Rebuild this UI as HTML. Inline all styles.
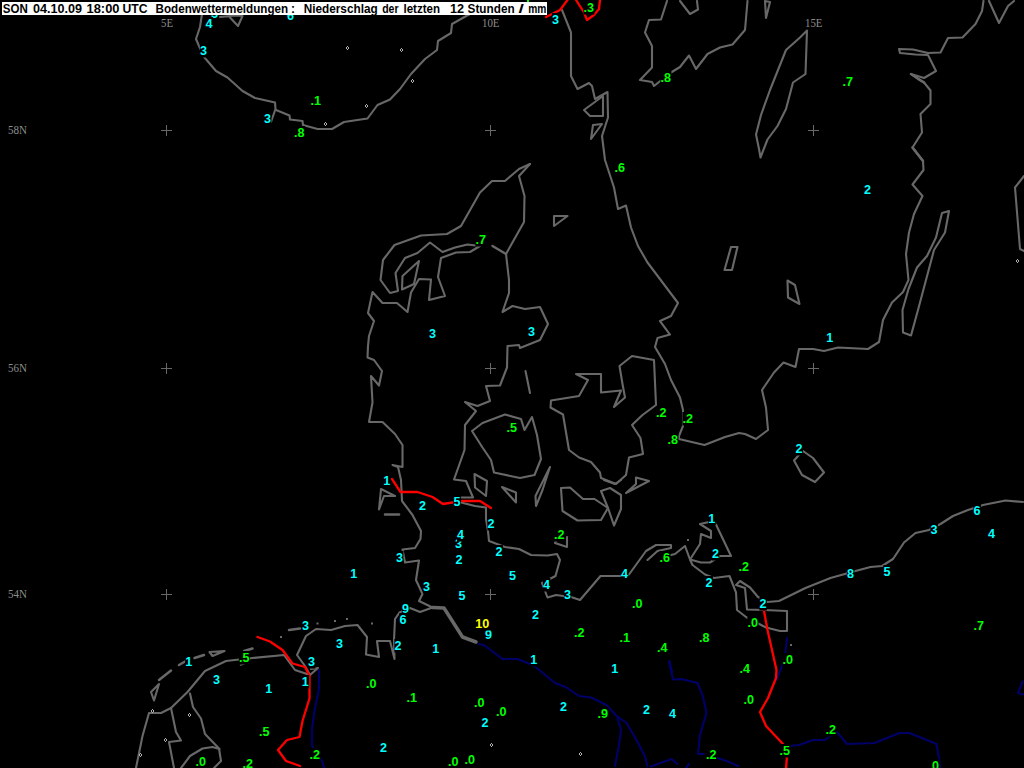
<!DOCTYPE html>
<html lang="de"><head><meta charset="utf-8"><title>Bodenwettermeldungen - Niederschlag</title>
<style>html,body{margin:0;padding:0;background:#000;overflow:hidden}svg{display:block}.lb text{font-family:"Liberation Sans",Arial,sans-serif;font-weight:bold;font-size:13px}.gl text{font-family:"Liberation Serif","Times New Roman",serif;font-size:12px;fill:#8c8c8c}.tt text{font-family:"Liberation Sans",Arial,sans-serif;font-weight:bold;font-size:12.5px;fill:#000}</style></head><body>
<svg width="1024" height="768" viewBox="0 0 1024 768">
<rect width="1024" height="768" fill="#000"/>
<g stroke="#686868" stroke-width="1" shape-rendering="crispEdges">
<path d="M161,130.5h11M166.5,125v11"/>
<path d="M161,368.5h11M166.5,363v11"/>
<path d="M161,594.5h11M166.5,589v11"/>
<path d="M485,130.5h11M490.5,125v11"/>
<path d="M485,368.5h11M490.5,363v11"/>
<path d="M485,594.5h11M490.5,589v11"/>
<path d="M808,130.5h11M813.5,125v11"/>
<path d="M808,368.5h11M813.5,363v11"/>
<path d="M808,594.5h11M813.5,589v11"/>
</g>
<g class="gl">
<text x="161" y="27" textLength="12" lengthAdjust="spacingAndGlyphs">5E</text>
<text x="482" y="27" textLength="17.5" lengthAdjust="spacingAndGlyphs">10E</text>
<text x="805" y="27" textLength="17.5" lengthAdjust="spacingAndGlyphs">15E</text>
<text x="8" y="134" textLength="19" lengthAdjust="spacingAndGlyphs">58N</text>
<text x="8" y="372" textLength="19" lengthAdjust="spacingAndGlyphs">56N</text>
<text x="8" y="598" textLength="19" lengthAdjust="spacingAndGlyphs">54N</text>
</g>
<g fill="none" stroke-linejoin="round" stroke-linecap="round">
<polyline points="202,14 200,27 196,39 199,46 204.5,57.5 216,71 227.5,77.5 242.5,91 255,98 275,102.5 275.5,109 271,122" stroke="#686868" stroke-width="2.1" />
<polyline points="276,110 289.5,115.5 290,119.5 302.5,121 303,125 317.5,129 332,129 344,122 367.5,118.5 377.5,105 390,99.5 400,89 411,74 425,59 437,50 438,41 451,33 452,24 464.5,17 470,14" stroke="#686868" stroke-width="2.1" />
<polyline points="220,17 235,15.5 242.5,16 238,26 230,17.5" stroke="#686868" stroke-width="2.1" />
<polyline points="562,10 571,32.5 571,76 577.5,89 589,83 592,86 595,99 607.5,92 608,117.5 602,136 605,160 614,187.5 618,209 626,205.5 631,227.5 638,246 647.5,262.5 678,303 671,316 660,321 670,334.5 657.5,338 655,347 665,364 671,380 680,397.5 683,410 683,426 679,436 679,439 704.5,445 725,437 739,433 745,434 756,439 768,430 766,407.5 762,390 774,372.5 783.5,362.5 795.5,367 799,349 813,349 824,351 838,347.5 868,349 879,342 883,320 892,302.5 903,292 908.5,280 906,254 909,232.5 914,214 922.5,196 912.5,184.5 923.5,170 923,161 912.5,147.5 922,132.5 920.5,114 930.5,104 930.5,90.5 924,82.5 918,79 911,74 924,78 936,71 928,55 915.5,54.5 900,53 899,49 913,49.5 928,53 940.5,52.5 948,38 962.5,37.5 975.5,24 982,11 983.5,1" stroke="#686868" stroke-width="2.1" />
<polyline points="603,96 584,110 590,116 603,116 603,96" stroke="#686868" stroke-width="2.1" />
<polyline points="593,125 602,124 591,139 593,125" stroke="#686868" stroke-width="2.1" />
<polyline points="667,1 661,19.5 649,20 645,32.5 652,46 652,67.5 640,80 652,82 654,86 659,82 671,72.5 680,67 689,55.5 696,69 707.5,54 720,47.5 732.5,44.5 745,30 747.5,1" stroke="#686868" stroke-width="2.1" />
<polyline points="680,1 690,14 698,9.5 697,1" stroke="#686868" stroke-width="2.1" />
<polyline points="765,1 766,18 770,2 765,1" stroke="#686868" stroke-width="2.1" />
<polyline points="807,30.5 800,37.5 786,50 770,90 761,115 756,134.5 759,149 760.5,157.5 767.5,139.5 777.5,126 786,109 793,82.5 805.5,74 807,30.5" stroke="#686868" stroke-width="2.1" />
<polyline points="989,1 999,23 1008,6 1014,1" stroke="#686868" stroke-width="2.1" />
<polyline points="1024,176 1015,187.5 1020,249 1024,251" stroke="#686868" stroke-width="2.1" />
<polyline points="731,247 737.5,247 732,270 724.5,270 731,247" stroke="#686868" stroke-width="2.1" />
<polyline points="787.5,280.5 795,285 799.5,304 788,297.5 787.5,280.5" stroke="#686868" stroke-width="2.1" />
<polyline points="949,211 942,213 936,237.5 927,256 917,267.5 908.5,289 902.5,310 903,332.5 911,335.5 918,310 934,250 945,232.5 949,211" stroke="#686868" stroke-width="2.1" />
<polyline points="803,451 813,458 824,472.5 815,482 802,475 794,460.5 798,456 803,451" stroke="#686868" stroke-width="2.1" />
<polyline points="530,164 519,169 505,181 492,181 480,192.5 461,226 447,234 421,235.5 394.5,245 383,260 380.5,280 390,293 398,291 395.5,273 405,258 417.5,253 430,242.5 442.5,252 455,247.5 467.5,244.5 480,246 470,252 456,252.5 441,258 438,277 445,296 429,300 431,279.5 419,279 411,292.5 407.5,312 397,303 382.5,303 372.5,292 368,313 374,321 369,336 368,346 367.5,357.5 374,360 382,371 379,385.5 371,376 372.5,402.5 369,422 382.5,422 395,434 402.5,445 402.5,467 392.5,465 398,467 401,480 402,501 412.5,515 421,531 420.5,539 415,548 402.5,549.5 405,562.5 419,560.5 416,580 422.5,594 419,601 432.5,607.5 420,612 410,608 399.5,612.5 395,619 394,640 394.5,659 390,641 377,641 379,657 366,654.5 367,637 357.5,625 345,626 331,630 316,629 306,636 297,655 305,666 310,675 295,670 284,655 252.5,658 226,661 205,671 187.5,692 171,708 161,713 149,713 142.5,736 136,768" stroke="#686868" stroke-width="2.1" />
<polyline points="310,675 318,668 311,669" stroke="#686868" stroke-width="2.1" />
<polyline points="530,164 519,176 524.5,196 524,222 506,254 509,280 509,293 502.5,312 512.5,306 525,309 540,307 548,324 540,340 520,348 519,345 507.5,346 507,367.5 500,385.5 486,386 490,401 477.5,406 465,402 476,411 465,425 464.5,450 454,479.5 466,481 473,497.5 461,497.5" stroke="#686868" stroke-width="2.1" />
<polyline points="461,502.5 475,506 486,507.5 486,519 488,531 489,541 505,547 519,549 531,555 547.5,555.5 557,554 560,560 555.5,576 542,583 547.5,597.5 556,595 571,597 580,600 600.5,576 620,576 629,574.5 646,551 656,545 671,545 671,548 657.5,551 647.5,560" stroke="#686868" stroke-width="2.1" />
<polyline points="671,555 675,554 685,546 690,559.5 701,562.5 710,562.5 720,556 731,556 716,524.5" stroke="#686868" stroke-width="2.1" />
<polyline points="709,522 700,524 711,531 711,538 701,534 700,544 690,559.5 692.5,565 705,574.5 714,578 729.5,576 736,592.5 737,610 746,617 766,627.5 780,631 787,631 787,611 764,610 747,609.5 745,588 736,585 740,581 750,587.5 758,597 767.5,602 779,601 805.5,588 830.5,578 855.5,571 870.5,567 882,566 893,559 904,542.5 915.5,533 929,530 940.5,524 953,516 968,510 983,505 1005.5,500.5 1023,502" stroke="#686868" stroke-width="2.1" />
<polyline points="554,216 567.5,216 554,226 554,216" stroke="#686868" stroke-width="2.1" />
<polyline points="419,261 402.5,276 402,289.5 414,284 419,261" stroke="#686868" stroke-width="2.1" />
<polyline points="505,414.5 482.5,423 472,431 482.5,447.5 491,460 494,472.5 520,478 534.5,475 541,459 537,435 532,417 524.5,430 521,419 505,414.5" stroke="#686868" stroke-width="2.1" />
<polyline points="525.5,371 530,393" stroke="#686868" stroke-width="2.1" />
<polyline points="474.5,474 487,481 486,496 475,487.5 474.5,474" stroke="#686868" stroke-width="2.1" />
<polyline points="502,487 516,492.5 516,502.5 502,487" stroke="#686868" stroke-width="2.1" />
<polyline points="550,467 535.5,496 536,506 542.5,490 550,467" stroke="#686868" stroke-width="2.1" />
<polyline points="632,356 619.5,366 622.5,384 625,397.5 614,407 621,390.5 601,392.5 601,374 576,374 588,380 579,396 551,400.5 550.5,407.5 563,414.5 569,450 579,457.5 591,462 600,472.5 601,478 616,484 626,475 629,457.5 643,454 640.5,438 632,425 642.5,415 656,405 654,360 632,356" stroke="#686868" stroke-width="2.1" />
<polyline points="636,477.5 649,481 626,493 636,484 636,477.5" stroke="#686868" stroke-width="2.1" />
<polyline points="561,488 570,487.5 583,499 594.5,499 608,508 601,520 577.5,520.5 562.5,511 561,488" stroke="#686868" stroke-width="2.1" />
<polyline points="601,491 610,488 621,495 621,509 614,525.5 608,508 601,491" stroke="#686868" stroke-width="2.1" />
<polyline points="604,480 615,484 621,480" stroke="#686868" stroke-width="2.1" />
<polyline points="557,538 555,543 567,547 567,537" stroke="#686868" stroke-width="2.1" />
<polyline points="381,489 395,496 384,496 379,509.5 381,489" stroke="#686868" stroke-width="2.1" />
<polyline points="171,708 176,732 181,740.5 169,742 174,768" stroke="#686868" stroke-width="2.1" />
<polyline points="190,693.5 193,707 201,718.5 205,734 219,748.5 221,761 214,768" stroke="#686868" stroke-width="2.1" />
<polyline points="181,768 190,756 202.5,748.5 212.5,747 219.5,749" stroke="#686868" stroke-width="2.1" />
<polyline points="209.5,652 224.5,651 212.5,656 209.5,652" stroke="#686868" stroke-width="2.1" />
<polyline points="159,684 151,692 154,700.5 159,684" stroke="#686868" stroke-width="2.1" />
<polyline points="432.5,607.5 444,608 462.5,637 476,642" stroke="#686868" stroke-width="3.5" />
<polyline points="492.5,246 506,254" stroke="#686868" stroke-width="2.5" />
<polyline points="912.5,147.5 923,161" stroke="#686868" stroke-width="2.5" />
<polyline points="385,514.5 399,514.5" stroke="#686868" stroke-width="2.5" />
<polyline points="289,630 300,628.5" stroke="#686868" stroke-width="2.5" />
<polyline points="244,651 252.5,648.5" stroke="#686868" stroke-width="2.5" />
<polyline points="240.5,665 244,664" stroke="#686868" stroke-width="1.5" />
<polyline points="194.5,658 204,655" stroke="#686868" stroke-width="2.5" />
<polyline points="179,665 185,661.5" stroke="#686868" stroke-width="2.5" />
<polyline points="159,680 171,670.5" stroke="#686868" stroke-width="2.5" />
<polyline points="911,74 924,82.5" stroke="#686868" stroke-width="2.5" />
<polyline points="319,670 319,688.5 314.5,711 312,728.5 312,746 322.5,762 324,768" stroke="#000068" stroke-width="2.1" />
<polyline points="479,644 484,645 502.5,659 517.5,659 527.5,663 535,666.5 555,683 566.5,687.5 579,696 591,697.5 606.5,705 616.5,716 626.5,723 636.5,740 645,756.5 647.5,766.5" stroke="#000068" stroke-width="2.1" />
<polyline points="617.5,718 621,730 619,745 615,766" stroke="#000068" stroke-width="2.1" />
<polyline points="651,766.5 671.5,759 677.5,764" stroke="#000068" stroke-width="2.1" />
<polyline points="669,661.5 673,679.5 681.5,679 697.5,683 703,696.5 706.5,713 700,735 698,754 704,754" stroke="#000068" stroke-width="2.1" />
<polyline points="689,764 686,768" stroke="#000068" stroke-width="2.1" />
<polyline points="717.5,758 728,761.5 738,766" stroke="#000068" stroke-width="2.1" />
<polyline points="787,638 785.5,652.5" stroke="#000068" stroke-width="2.1" />
<polyline points="783,663 776.5,680" stroke="#000068" stroke-width="2.1" />
<polyline points="791,746 799,745 813,740 825,740 830.5,736 837,732 847,744 874.5,743 899.5,733 909.5,733 936.5,744 939,758 940,768" stroke="#000068" stroke-width="2.1" />
<polyline points="1022.5,681.5 1018,693 1023,694.5" stroke="#000068" stroke-width="2.1" />
<polyline points="669.5,661 672,672" stroke="#000068" stroke-width="2.1" />
<polyline points="546,17 560,10 567.5,0" stroke="#ff0000" stroke-width="2.3" />
<polyline points="576,0 584,12.5 587,20 594,15 599,9 600,0" stroke="#ff0000" stroke-width="2.3" />
<polyline points="392,479 400.5,492 417.5,492 432.5,497 443,504 452.5,502.5" stroke="#ff0000" stroke-width="2.3" />
<polyline points="462,501 480,501 491,508" stroke="#ff0000" stroke-width="2.3" />
<polyline points="257.5,637 270,641.5 282.5,650 292.5,663.5 305,667 309.5,676 309.5,698.5 302.5,721 299.5,737 287,740 278,750 286,761 300,766" stroke="#ff0000" stroke-width="2.3" />
<polyline points="764,611 767.5,630 776.5,670 776,678 768,698 760,712 766,726 783,744 787,756.5 786,768" stroke="#ff0000" stroke-width="2.3" />
</g>
<rect x="280" y="636" width="2" height="2" fill="#686868"/>
<rect x="316.5" y="622.5" width="2" height="2" fill="#686868"/>
<rect x="334" y="620" width="2" height="2" fill="#686868"/>
<rect x="346" y="618" width="2" height="2" fill="#686868"/>
<rect x="371" y="622.5" width="2" height="2" fill="#686868"/>
<rect x="687" y="539" width="2" height="2" fill="#686868"/>
<rect x="790" y="644" width="2" height="2" fill="#686868"/>
<g fill="#b0b0b0" shape-rendering="crispEdges">
<path d="M347,46h1v1h-1zM346,47h1v2h-1zM348,47h1v2h-1zM347,49h1v1h-1z"/>
<path d="M401,48h1v1h-1zM400,49h1v2h-1zM402,49h1v2h-1zM401,51h1v1h-1z"/>
<path d="M412,79h1v1h-1zM411,80h1v2h-1zM413,80h1v2h-1zM412,82h1v1h-1z"/>
<path d="M366,104h1v1h-1zM365,105h1v2h-1zM367,105h1v2h-1zM366,107h1v1h-1z"/>
<path d="M325,122h1v1h-1zM324,123h1v2h-1zM326,123h1v2h-1zM325,125h1v1h-1z"/>
<path d="M1017,259h1v1h-1zM1016,260h1v2h-1zM1018,260h1v2h-1zM1017,262h1v1h-1z"/>
<path d="M152,709h1v1h-1zM151,710h1v2h-1zM153,710h1v2h-1zM152,712h1v1h-1z"/>
<path d="M189,713h1v1h-1zM188,714h1v2h-1zM190,714h1v2h-1zM189,716h1v1h-1z"/>
<path d="M165,738h1v1h-1zM164,739h1v2h-1zM166,739h1v2h-1zM165,741h1v1h-1z"/>
<path d="M140,753h1v1h-1zM139,754h1v2h-1zM141,754h1v2h-1zM140,756h1v1h-1z"/>
<path d="M491,743h1v1h-1zM490,744h1v2h-1zM492,744h1v2h-1zM491,746h1v1h-1z"/>
<path d="M580,752h1v1h-1zM579,753h1v2h-1zM581,753h1v2h-1zM580,755h1v1h-1z"/>
</g>
<g class="lb">
<rect x="286.9" y="9.0" width="7.5" height="13.5" fill="#000"/><text x="286.9" y="20.0" fill="#00ffff" textLength="7.0" lengthAdjust="spacingAndGlyphs">6</text>
<rect x="210.9" y="7.0" width="7.5" height="13.5" fill="#000"/><text x="210.9" y="18.0" fill="#00ffff" textLength="7.0" lengthAdjust="spacingAndGlyphs">3</text>
<rect x="205.6" y="17.0" width="7.5" height="13.5" fill="#000"/><text x="205.6" y="28.0" fill="#00ffff" textLength="7.0" lengthAdjust="spacingAndGlyphs">4</text>
<rect x="199.9" y="44.0" width="7.5" height="13.5" fill="#000"/><text x="199.9" y="55.0" fill="#00ffff" textLength="7.0" lengthAdjust="spacingAndGlyphs">3</text>
<rect x="263.9" y="112.0" width="7.5" height="13.5" fill="#000"/><text x="263.9" y="123.0" fill="#00ffff" textLength="7.0" lengthAdjust="spacingAndGlyphs">3</text>
<rect x="551.9" y="13.0" width="7.5" height="13.5" fill="#000"/><text x="551.9" y="24.0" fill="#00ffff" textLength="7.0" lengthAdjust="spacingAndGlyphs">3</text>
<rect x="863.9" y="183.0" width="7.5" height="13.5" fill="#000"/><text x="863.9" y="194.0" fill="#00ffff" textLength="7.0" lengthAdjust="spacingAndGlyphs">2</text>
<rect x="428.9" y="327.0" width="7.5" height="13.5" fill="#000"/><text x="428.9" y="338.0" fill="#00ffff" textLength="7.0" lengthAdjust="spacingAndGlyphs">3</text>
<rect x="527.9" y="325.0" width="7.5" height="13.5" fill="#000"/><text x="527.9" y="336.0" fill="#00ffff" textLength="7.0" lengthAdjust="spacingAndGlyphs">3</text>
<rect x="826.2" y="331.0" width="7.5" height="13.5" fill="#000"/><text x="826.2" y="342.0" fill="#00ffff" textLength="7.0" lengthAdjust="spacingAndGlyphs">1</text>
<rect x="795.4" y="442.0" width="7.5" height="13.5" fill="#000"/><text x="795.4" y="453.0" fill="#00ffff" textLength="7.0" lengthAdjust="spacingAndGlyphs">2</text>
<rect x="383.2" y="474.0" width="7.5" height="13.5" fill="#000"/><text x="383.2" y="485.0" fill="#00ffff" textLength="7.0" lengthAdjust="spacingAndGlyphs">1</text>
<rect x="418.9" y="499.0" width="7.5" height="13.5" fill="#000"/><text x="418.9" y="510.0" fill="#00ffff" textLength="7.0" lengthAdjust="spacingAndGlyphs">2</text>
<rect x="453.4" y="495.0" width="7.5" height="13.5" fill="#000"/><text x="453.4" y="506.0" fill="#00ffff" textLength="7.0" lengthAdjust="spacingAndGlyphs">5</text>
<rect x="487.4" y="517.0" width="7.5" height="13.5" fill="#000"/><text x="487.4" y="528.0" fill="#00ffff" textLength="7.0" lengthAdjust="spacingAndGlyphs">2</text>
<rect x="454.9" y="536.5" width="7.5" height="13.5" fill="#000"/><text x="454.9" y="547.5" fill="#00ffff" textLength="7.0" lengthAdjust="spacingAndGlyphs">3</text>
<rect x="456.9" y="528.0" width="7.5" height="13.5" fill="#000"/><text x="456.9" y="539.0" fill="#00ffff" textLength="7.0" lengthAdjust="spacingAndGlyphs">4</text>
<rect x="455.4" y="553.0" width="7.5" height="13.5" fill="#000"/><text x="455.4" y="564.0" fill="#00ffff" textLength="7.0" lengthAdjust="spacingAndGlyphs">2</text>
<rect x="395.9" y="551.0" width="7.5" height="13.5" fill="#000"/><text x="395.9" y="562.0" fill="#00ffff" textLength="7.0" lengthAdjust="spacingAndGlyphs">3</text>
<rect x="350.2" y="567.0" width="7.5" height="13.5" fill="#000"/><text x="350.2" y="578.0" fill="#00ffff" textLength="7.0" lengthAdjust="spacingAndGlyphs">1</text>
<rect x="422.9" y="580.0" width="7.5" height="13.5" fill="#000"/><text x="422.9" y="591.0" fill="#00ffff" textLength="7.0" lengthAdjust="spacingAndGlyphs">3</text>
<rect x="458.4" y="589.0" width="7.5" height="13.5" fill="#000"/><text x="458.4" y="600.0" fill="#00ffff" textLength="7.0" lengthAdjust="spacingAndGlyphs">5</text>
<rect x="401.9" y="602.0" width="7.5" height="13.5" fill="#000"/><text x="401.9" y="613.0" fill="#00ffff" textLength="7.0" lengthAdjust="spacingAndGlyphs">9</text>
<rect x="399.4" y="613.0" width="7.5" height="13.5" fill="#000"/><text x="399.4" y="624.0" fill="#00ffff" textLength="7.0" lengthAdjust="spacingAndGlyphs">6</text>
<rect x="394.4" y="639.0" width="7.5" height="13.5" fill="#000"/><text x="394.4" y="650.0" fill="#00ffff" textLength="7.0" lengthAdjust="spacingAndGlyphs">2</text>
<rect x="432.2" y="642.0" width="7.5" height="13.5" fill="#000"/><text x="432.2" y="653.0" fill="#00ffff" textLength="7.0" lengthAdjust="spacingAndGlyphs">1</text>
<rect x="484.9" y="628.0" width="7.5" height="13.5" fill="#000"/><text x="484.9" y="639.0" fill="#00ffff" textLength="7.0" lengthAdjust="spacingAndGlyphs">9</text>
<rect x="508.9" y="569.0" width="7.5" height="13.5" fill="#000"/><text x="508.9" y="580.0" fill="#00ffff" textLength="7.0" lengthAdjust="spacingAndGlyphs">5</text>
<rect x="495.4" y="545.0" width="7.5" height="13.5" fill="#000"/><text x="495.4" y="556.0" fill="#00ffff" textLength="7.0" lengthAdjust="spacingAndGlyphs">2</text>
<rect x="542.9" y="578.0" width="7.5" height="13.5" fill="#000"/><text x="542.9" y="589.0" fill="#00ffff" textLength="7.0" lengthAdjust="spacingAndGlyphs">4</text>
<rect x="563.9" y="588.0" width="7.5" height="13.5" fill="#000"/><text x="563.9" y="599.0" fill="#00ffff" textLength="7.0" lengthAdjust="spacingAndGlyphs">3</text>
<rect x="531.9" y="608.0" width="7.5" height="13.5" fill="#000"/><text x="531.9" y="619.0" fill="#00ffff" textLength="7.0" lengthAdjust="spacingAndGlyphs">2</text>
<rect x="530.2" y="653.0" width="7.5" height="13.5" fill="#000"/><text x="530.2" y="664.0" fill="#00ffff" textLength="7.0" lengthAdjust="spacingAndGlyphs">1</text>
<rect x="708.2" y="512.0" width="7.5" height="13.5" fill="#000"/><text x="708.2" y="523.0" fill="#00ffff" textLength="7.0" lengthAdjust="spacingAndGlyphs">1</text>
<rect x="711.9" y="547.0" width="7.5" height="13.5" fill="#000"/><text x="711.9" y="558.0" fill="#00ffff" textLength="7.0" lengthAdjust="spacingAndGlyphs">2</text>
<rect x="705.4" y="576.0" width="7.5" height="13.5" fill="#000"/><text x="705.4" y="587.0" fill="#00ffff" textLength="7.0" lengthAdjust="spacingAndGlyphs">2</text>
<rect x="759.4" y="597.0" width="7.5" height="13.5" fill="#000"/><text x="759.4" y="608.0" fill="#00ffff" textLength="7.0" lengthAdjust="spacingAndGlyphs">2</text>
<rect x="620.9" y="567.0" width="7.5" height="13.5" fill="#000"/><text x="620.9" y="578.0" fill="#00ffff" textLength="7.0" lengthAdjust="spacingAndGlyphs">4</text>
<rect x="973.4" y="504.0" width="7.5" height="13.5" fill="#000"/><text x="973.4" y="515.0" fill="#00ffff" textLength="7.0" lengthAdjust="spacingAndGlyphs">6</text>
<rect x="930.4" y="523.0" width="7.5" height="13.5" fill="#000"/><text x="930.4" y="534.0" fill="#00ffff" textLength="7.0" lengthAdjust="spacingAndGlyphs">3</text>
<rect x="987.9" y="527.0" width="7.5" height="13.5" fill="#000"/><text x="987.9" y="538.0" fill="#00ffff" textLength="7.0" lengthAdjust="spacingAndGlyphs">4</text>
<rect x="846.9" y="567.0" width="7.5" height="13.5" fill="#000"/><text x="846.9" y="578.0" fill="#00ffff" textLength="7.0" lengthAdjust="spacingAndGlyphs">8</text>
<rect x="883.4" y="565.0" width="7.5" height="13.5" fill="#000"/><text x="883.4" y="576.0" fill="#00ffff" textLength="7.0" lengthAdjust="spacingAndGlyphs">5</text>
<rect x="301.9" y="619.0" width="7.5" height="13.5" fill="#000"/><text x="301.9" y="630.0" fill="#00ffff" textLength="7.0" lengthAdjust="spacingAndGlyphs">3</text>
<rect x="335.9" y="637.0" width="7.5" height="13.5" fill="#000"/><text x="335.9" y="648.0" fill="#00ffff" textLength="7.0" lengthAdjust="spacingAndGlyphs">3</text>
<rect x="307.9" y="655.0" width="7.5" height="13.5" fill="#000"/><text x="307.9" y="666.0" fill="#00ffff" textLength="7.0" lengthAdjust="spacingAndGlyphs">3</text>
<rect x="301.7" y="675.0" width="7.5" height="13.5" fill="#000"/><text x="301.7" y="686.0" fill="#00ffff" textLength="7.0" lengthAdjust="spacingAndGlyphs">1</text>
<rect x="265.2" y="682.0" width="7.5" height="13.5" fill="#000"/><text x="265.2" y="693.0" fill="#00ffff" textLength="7.0" lengthAdjust="spacingAndGlyphs">1</text>
<rect x="212.9" y="673.0" width="7.5" height="13.5" fill="#000"/><text x="212.9" y="684.0" fill="#00ffff" textLength="7.0" lengthAdjust="spacingAndGlyphs">3</text>
<rect x="185.2" y="655.0" width="7.5" height="13.5" fill="#000"/><text x="185.2" y="666.0" fill="#00ffff" textLength="7.0" lengthAdjust="spacingAndGlyphs">1</text>
<rect x="379.9" y="741.0" width="7.5" height="13.5" fill="#000"/><text x="379.9" y="752.0" fill="#00ffff" textLength="7.0" lengthAdjust="spacingAndGlyphs">2</text>
<rect x="481.4" y="716.0" width="7.5" height="13.5" fill="#000"/><text x="481.4" y="727.0" fill="#00ffff" textLength="7.0" lengthAdjust="spacingAndGlyphs">2</text>
<rect x="611.2" y="662.0" width="7.5" height="13.5" fill="#000"/><text x="611.2" y="673.0" fill="#00ffff" textLength="7.0" lengthAdjust="spacingAndGlyphs">1</text>
<rect x="559.9" y="700.0" width="7.5" height="13.5" fill="#000"/><text x="559.9" y="711.0" fill="#00ffff" textLength="7.0" lengthAdjust="spacingAndGlyphs">2</text>
<rect x="642.9" y="703.0" width="7.5" height="13.5" fill="#000"/><text x="642.9" y="714.0" fill="#00ffff" textLength="7.0" lengthAdjust="spacingAndGlyphs">2</text>
<rect x="668.9" y="707.0" width="7.5" height="13.5" fill="#000"/><text x="668.9" y="718.0" fill="#00ffff" textLength="7.0" lengthAdjust="spacingAndGlyphs">4</text>
<rect x="475.2" y="617.0" width="14.5" height="13.5" fill="#000"/><text x="475.2" y="628.0" fill="#ffff00" textLength="14.0" lengthAdjust="spacingAndGlyphs">10</text>
<rect x="583.4" y="1.0" width="11.0" height="13.5" fill="#000"/><text x="583.4" y="12.0" fill="#00ff00" textLength="10.5" lengthAdjust="spacingAndGlyphs">.3</text>
<rect x="310.6" y="94.0" width="11.0" height="13.5" fill="#000"/><text x="310.6" y="105.0" fill="#00ff00" textLength="10.5" lengthAdjust="spacingAndGlyphs">.1</text>
<rect x="293.9" y="126.0" width="11.0" height="13.5" fill="#000"/><text x="293.9" y="137.0" fill="#00ff00" textLength="10.5" lengthAdjust="spacingAndGlyphs">.8</text>
<rect x="614.4" y="161.0" width="11.0" height="13.5" fill="#000"/><text x="614.4" y="172.0" fill="#00ff00" textLength="10.5" lengthAdjust="spacingAndGlyphs">.6</text>
<rect x="660.4" y="71.0" width="11.0" height="13.5" fill="#000"/><text x="660.4" y="82.0" fill="#00ff00" textLength="10.5" lengthAdjust="spacingAndGlyphs">.8</text>
<rect x="842.4" y="75.0" width="11.0" height="13.5" fill="#000"/><text x="842.4" y="86.0" fill="#00ff00" textLength="10.5" lengthAdjust="spacingAndGlyphs">.7</text>
<rect x="475.4" y="233.0" width="11.0" height="13.5" fill="#000"/><text x="475.4" y="244.0" fill="#00ff00" textLength="10.5" lengthAdjust="spacingAndGlyphs">.7</text>
<rect x="506.4" y="421.0" width="11.0" height="13.5" fill="#000"/><text x="506.4" y="432.0" fill="#00ff00" textLength="10.5" lengthAdjust="spacingAndGlyphs">.5</text>
<rect x="655.9" y="406.0" width="11.0" height="13.5" fill="#000"/><text x="655.9" y="417.0" fill="#00ff00" textLength="10.5" lengthAdjust="spacingAndGlyphs">.2</text>
<rect x="682.4" y="412.0" width="11.0" height="13.5" fill="#000"/><text x="682.4" y="423.0" fill="#00ff00" textLength="10.5" lengthAdjust="spacingAndGlyphs">.2</text>
<rect x="667.4" y="433.0" width="11.0" height="13.5" fill="#000"/><text x="667.4" y="444.0" fill="#00ff00" textLength="10.5" lengthAdjust="spacingAndGlyphs">.8</text>
<rect x="238.9" y="651.0" width="11.0" height="13.5" fill="#000"/><text x="238.9" y="662.0" fill="#00ff00" textLength="10.5" lengthAdjust="spacingAndGlyphs">.5</text>
<rect x="258.9" y="725.0" width="11.0" height="13.5" fill="#000"/><text x="258.9" y="736.0" fill="#00ff00" textLength="10.5" lengthAdjust="spacingAndGlyphs">.5</text>
<rect x="365.9" y="677.0" width="11.0" height="13.5" fill="#000"/><text x="365.9" y="688.0" fill="#00ff00" textLength="10.5" lengthAdjust="spacingAndGlyphs">.0</text>
<rect x="309.4" y="748.0" width="11.0" height="13.5" fill="#000"/><text x="309.4" y="759.0" fill="#00ff00" textLength="10.5" lengthAdjust="spacingAndGlyphs">.2</text>
<rect x="195.4" y="755.0" width="11.0" height="13.5" fill="#000"/><text x="195.4" y="766.0" fill="#00ff00" textLength="10.5" lengthAdjust="spacingAndGlyphs">.0</text>
<rect x="242.4" y="757.0" width="11.0" height="13.5" fill="#000"/><text x="242.4" y="768.0" fill="#00ff00" textLength="10.5" lengthAdjust="spacingAndGlyphs">.2</text>
<rect x="553.9" y="528.0" width="11.0" height="13.5" fill="#000"/><text x="553.9" y="539.0" fill="#00ff00" textLength="10.5" lengthAdjust="spacingAndGlyphs">.2</text>
<rect x="573.9" y="626.0" width="11.0" height="13.5" fill="#000"/><text x="573.9" y="637.0" fill="#00ff00" textLength="10.5" lengthAdjust="spacingAndGlyphs">.2</text>
<rect x="659.4" y="551.0" width="11.0" height="13.5" fill="#000"/><text x="659.4" y="562.0" fill="#00ff00" textLength="10.5" lengthAdjust="spacingAndGlyphs">.6</text>
<rect x="738.4" y="560.0" width="11.0" height="13.5" fill="#000"/><text x="738.4" y="571.0" fill="#00ff00" textLength="10.5" lengthAdjust="spacingAndGlyphs">.2</text>
<rect x="631.9" y="597.0" width="11.0" height="13.5" fill="#000"/><text x="631.9" y="608.0" fill="#00ff00" textLength="10.5" lengthAdjust="spacingAndGlyphs">.0</text>
<rect x="747.4" y="615.5" width="11.0" height="13.5" fill="#000"/><text x="747.4" y="626.5" fill="#00ff00" textLength="10.5" lengthAdjust="spacingAndGlyphs">.0</text>
<rect x="619.6" y="631.0" width="11.0" height="13.5" fill="#000"/><text x="619.6" y="642.0" fill="#00ff00" textLength="10.5" lengthAdjust="spacingAndGlyphs">.1</text>
<rect x="698.9" y="631.0" width="11.0" height="13.5" fill="#000"/><text x="698.9" y="642.0" fill="#00ff00" textLength="10.5" lengthAdjust="spacingAndGlyphs">.8</text>
<rect x="656.9" y="640.5" width="11.0" height="13.5" fill="#000"/><text x="656.9" y="651.5" fill="#00ff00" textLength="10.5" lengthAdjust="spacingAndGlyphs">.4</text>
<rect x="782.4" y="653.0" width="11.0" height="13.5" fill="#000"/><text x="782.4" y="664.0" fill="#00ff00" textLength="10.5" lengthAdjust="spacingAndGlyphs">.0</text>
<rect x="739.4" y="662.0" width="11.0" height="13.5" fill="#000"/><text x="739.4" y="673.0" fill="#00ff00" textLength="10.5" lengthAdjust="spacingAndGlyphs">.4</text>
<rect x="973.4" y="619.0" width="11.0" height="13.5" fill="#000"/><text x="973.4" y="630.0" fill="#00ff00" textLength="10.5" lengthAdjust="spacingAndGlyphs">.7</text>
<rect x="406.6" y="691.0" width="11.0" height="13.5" fill="#000"/><text x="406.6" y="702.0" fill="#00ff00" textLength="10.5" lengthAdjust="spacingAndGlyphs">.1</text>
<rect x="473.9" y="696.0" width="11.0" height="13.5" fill="#000"/><text x="473.9" y="707.0" fill="#00ff00" textLength="10.5" lengthAdjust="spacingAndGlyphs">.0</text>
<rect x="495.9" y="705.0" width="11.0" height="13.5" fill="#000"/><text x="495.9" y="716.0" fill="#00ff00" textLength="10.5" lengthAdjust="spacingAndGlyphs">.0</text>
<rect x="447.9" y="755.0" width="11.0" height="13.5" fill="#000"/><text x="447.9" y="766.0" fill="#00ff00" textLength="10.5" lengthAdjust="spacingAndGlyphs">.0</text>
<rect x="464.4" y="753.0" width="11.0" height="13.5" fill="#000"/><text x="464.4" y="764.0" fill="#00ff00" textLength="10.5" lengthAdjust="spacingAndGlyphs">.0</text>
<rect x="597.4" y="707.0" width="11.0" height="13.5" fill="#000"/><text x="597.4" y="718.0" fill="#00ff00" textLength="10.5" lengthAdjust="spacingAndGlyphs">.9</text>
<rect x="743.4" y="693.0" width="11.0" height="13.5" fill="#000"/><text x="743.4" y="704.0" fill="#00ff00" textLength="10.5" lengthAdjust="spacingAndGlyphs">.0</text>
<rect x="705.9" y="748.0" width="11.0" height="13.5" fill="#000"/><text x="705.9" y="759.0" fill="#00ff00" textLength="10.5" lengthAdjust="spacingAndGlyphs">.2</text>
<rect x="779.4" y="744.0" width="11.0" height="13.5" fill="#000"/><text x="779.4" y="755.0" fill="#00ff00" textLength="10.5" lengthAdjust="spacingAndGlyphs">.5</text>
<rect x="825.4" y="723.0" width="11.0" height="13.5" fill="#000"/><text x="825.4" y="734.0" fill="#00ff00" textLength="10.5" lengthAdjust="spacingAndGlyphs">.2</text>
<rect x="928.4" y="759.0" width="11.0" height="13.5" fill="#000"/><text x="928.4" y="770.0" fill="#00ff00" textLength="10.5" lengthAdjust="spacingAndGlyphs">.0</text>
</g>
<rect x="2" y="2" width="545" height="13" fill="#fff"/>
<rect x="527" y="0" width="2" height="2" fill="#00ff00"/>
<g class="tt">
<text x="2.8" y="13" textLength="25.0" lengthAdjust="spacingAndGlyphs">SON</text>
<text x="32.9" y="13" textLength="49.1" lengthAdjust="spacingAndGlyphs">04.10.09</text>
<text x="86.5" y="13" textLength="33.0" lengthAdjust="spacingAndGlyphs">18:00</text>
<text x="122.5" y="13" textLength="25.0" lengthAdjust="spacingAndGlyphs">UTC</text>
<text x="155.6" y="13" textLength="132.5" lengthAdjust="spacingAndGlyphs">Bodenwettermeldungen</text>
<text x="291.0" y="13" textLength="4.0" lengthAdjust="spacingAndGlyphs">:</text>
<text x="303.7" y="13" textLength="74.0" lengthAdjust="spacingAndGlyphs">Niederschlag</text>
<text x="382.2" y="13" textLength="16.3" lengthAdjust="spacingAndGlyphs">der</text>
<text x="403.5" y="13" textLength="36.5" lengthAdjust="spacingAndGlyphs">letzten</text>
<text x="450.0" y="13" textLength="14.1" lengthAdjust="spacingAndGlyphs">12</text>
<text x="467.6" y="13" textLength="47.0" lengthAdjust="spacingAndGlyphs">Stunden</text>
<text x="518.5" y="13" textLength="5.4" lengthAdjust="spacingAndGlyphs">/</text>
<text x="528.2" y="13" textLength="18.1" lengthAdjust="spacingAndGlyphs">mm</text>
</g>
</svg></body></html>
